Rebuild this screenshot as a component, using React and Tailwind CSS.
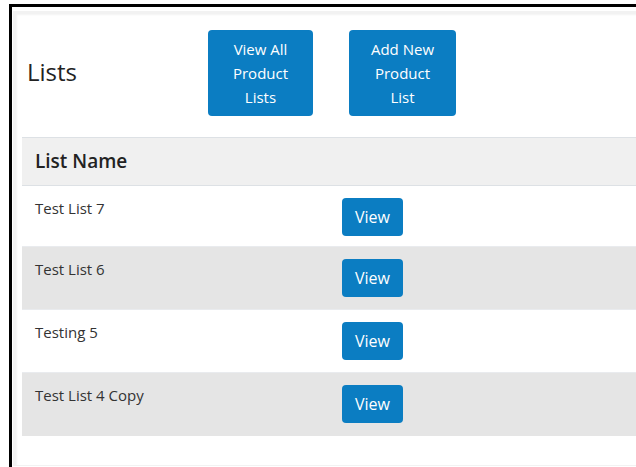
const lists = [
  { id: 7, name: "Test List 7" },
  { id: 6, name: "Test List 6" },
  { id: 5, name: "Testing 5" },
  { id: 4, name: "Test List 4 Copy" },
];

const ActionButton = ({ children, width }) => (
  <button
    type="button"
    className={`${width} rounded-[4px] bg-[#0b7dc2] px-[12px] py-[7px] text-center text-[15px] leading-[24px] text-white`}
  >
    {children}
  </button>
);

const App = () => {
  return (
    <div className="h-[467px] w-[636px] overflow-hidden bg-white font-['Open_Sans',sans-serif] text-[#333]">
      <div className="ml-[9px] mt-[4px] h-[470px] w-[700px] border-l-[3px] border-t-[3px] border-black">
        <div className="ml-[1px] mt-[4px] h-[455px] border-l-[3px] border-t-[3px] border-b border-[#f2f2f2] shadow-[inset_1px_1px_2px_rgba(0,0,0,0.05)]">
          <div className="px-[6px]">
            <div className="flex items-center pl-[5px] pt-[16px] pb-[21px]">
              <h1 className="w-[181px] pb-[2px] text-[24px] font-normal leading-[30px] text-[#222]">
                Lists
              </h1>
              <div className="flex gap-[36px]">
                <ActionButton width="w-[105px]">View All Product Lists</ActionButton>
                <ActionButton width="w-[107px]">Add New Product List</ActionButton>
              </div>
            </div>

            <table className="w-full border-collapse">
              <thead>
                <tr className="h-[48px] border-y border-[#dde1e5] bg-[#f0f0f0]">
                  <th className="w-[308px] pl-[13px] text-left text-[19px] font-semibold text-[#222]">
                    List Name
                  </th>
                  <th />
                </tr>
              </thead>
              <tbody>
                {lists.map((list, i) => (
                  <tr
                    key={list.id}
                    className={`align-top ${i % 2 ? "bg-[#e5e5e5]" : "bg-white"} ${i ? "h-[63px] border-t border-[#e9ebee]" : "h-[61px]"}`}
                  >
                    <td className="pl-[13px] pt-[11px] text-[15px] leading-[22px]">
                      {list.name}
                    </td>
                    <td className="pl-[12px] pt-[12px]">
                      <button
                        type="button"
                        className="h-[38px] w-[61px] rounded-[4px] bg-[#0b7dc2] text-[16px] text-white"
                      >
                        View
                      </button>
                    </td>
                  </tr>
                ))}
              </tbody>
            </table>
          </div>
        </div>
      </div>
    </div>
  );
};

export default App;
